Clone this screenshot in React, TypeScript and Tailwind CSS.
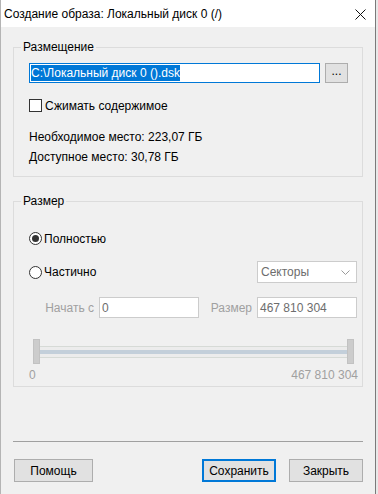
import React from "react";

const font = { fontFamily: '"Liberation Sans", Arial, sans-serif' };

function Radio({ checked }: { checked?: boolean }) {
  return (
    <span className="flex h-[13px] w-[13px] shrink-0 items-center justify-center rounded-full border border-[#333] bg-white">
      {checked && <span className="h-[7px] w-[7px] rounded-full bg-[#333]" />}
    </span>
  );
}

export default function App() {
  return (
    <div className="h-[494px] w-[378px] overflow-hidden bg-[#e8e8e8] text-[12px] text-black" style={font}>
      <div className="flex h-[494px] w-[376px] flex-col border-l border-r border-l-[#b4b4b4] border-r-[#7a7a7a] bg-[#f0f0f0]">
        {/* Title bar */}
        <div className="flex h-[27px] shrink-0 items-center justify-between bg-white pl-[3px] pr-[9px]">
          <span className="leading-[16px]">Создание образа: Локальный диск 0 (/)</span>
          <svg width="11" height="11" viewBox="0 0 11 11" className="mt-[1px]">
            <path d="M0.5 0.5 L10.5 10.5 M10.5 0.5 L0.5 10.5" stroke="#111" strokeWidth="1" />
          </svg>
        </div>

        <div className="flex flex-col px-[12px]">
          {/* Placement */}
          <fieldset className="mt-[13px] border border-[#dcdcdc]">
            <legend className="ml-[7px] px-[2px] leading-[14px]">Размещение</legend>
            <div className="flex flex-col pl-[15px] pr-[14px] pb-[11px]">
              <div className="mt-[9px] flex h-[20px] gap-[5px]">
                <div className="flex w-[291px] items-center border border-[#0078d7] bg-white pl-[1px]">
                  <span className="bg-[#0078d7] leading-[16px] text-white">C:\Локальный диск 0 ().dsk</span>
                </div>
                <button className="w-[23px] border border-[#adadad] bg-[#e1e1e1] pb-[4px] leading-[12px]">...</button>
              </div>
              <label className="mt-[16px] flex h-[13px] items-center gap-[3px]">
                <span className="h-[13px] w-[13px] border border-[#333] bg-white" />
                <span className="leading-[16px]">Сжимать содержимое</span>
              </label>
              <p className="mt-[17px] leading-[16px]">Необходимое место: 223,07 ГБ</p>
              <p className="mt-[4px] leading-[16px]">Доступное место: 30,78 ГБ</p>
            </div>
          </fieldset>

          {/* Size */}
          <fieldset className="mt-[17px] border border-[#dcdcdc]">
            <legend className="ml-[7px] px-[2px] leading-[14px]">Размер</legend>
            <div className="flex flex-col pb-[3px]">
              <label className="mt-[24px] flex h-[13px] items-center gap-[2px] pl-[15px]">
                <Radio checked />
                <span className="leading-[16px]">Полностью</span>
              </label>
              <div className="mt-[16px] flex h-[22px] items-center pl-[15px] pr-[5px]">
                <label className="flex items-center gap-[2px]">
                  <Radio />
                  <span className="leading-[16px]">Частично</span>
                </label>
                <div className="ml-auto flex h-[22px] w-[100px] items-center justify-between border border-[#cccccc] bg-white pl-[3px] pr-[6px] text-[#6d6d6d]">
                  <span className="leading-[16px]">Секторы</span>
                  <svg width="9" height="5" viewBox="0 0 9 5">
                    <path d="M0.5 0.5 L4.5 4.5 L8.5 0.5" fill="none" stroke="#9a9a9a" strokeWidth="1" />
                  </svg>
                </div>
              </div>
              <div className="mt-[14px] flex h-[21px] items-center">
                <span className="w-[85px] pr-[5px] text-right leading-[16px] text-[#a0a0a0]">Начать с</span>
                <div className="flex h-[21px] w-[100px] items-center border border-[#cccccc] bg-white pl-[2px] text-[#6d6d6d]">
                  <span className="leading-[16px]">0</span>
                </div>
                <span className="w-[58px] pr-[5px] text-right leading-[16px] text-[#a0a0a0]">Размер</span>
                <div className="flex h-[21px] w-[100px] items-center border border-[#cccccc] bg-white pl-[2px] text-[#6d6d6d]">
                  <span className="leading-[16px]">467 810 304</span>
                </div>
              </div>
              <div className="mt-[21px] flex h-[25px] items-center pl-[19px] pr-[8px]">
                <span className="h-[25px] w-[7px] border border-[#c2c2c2] bg-[#cccccc]" />
                <div className="flex h-[12px] flex-1 flex-col border-y border-[#d6dad6] bg-[#ececec]">
                  <span className="mt-[3px] h-[4px] bg-[#c3cfda]" />
                </div>
                <span className="h-[25px] w-[7px] border border-[#c2c2c2] bg-[#cccccc]" />
              </div>
              <div className="mt-[3px] flex justify-between pl-[15px] pr-[4px] leading-[16px] text-[#a0a0a0]">
                <span>0</span>
                <span>467 810 304</span>
              </div>
            </div>
          </fieldset>

          <div className="mt-[54px] h-px bg-[#a0a0a0]" />

          {/* Buttons */}
          <div className="mt-[17px] flex h-[23px]">
            <button className="ml-[1px] w-[79px] border border-[#adadad] bg-[#e1e1e1] leading-[16px]">Помощь</button>
            <button className="ml-auto w-[74px] border-2 border-[#0078d7] bg-[#e1e1e1] leading-[16px]">Сохранить</button>
            <button className="ml-[13px] w-[74px] border border-[#adadad] bg-[#e1e1e1] leading-[16px]">Закрыть</button>
          </div>
        </div>
      </div>
    </div>
  );
}
